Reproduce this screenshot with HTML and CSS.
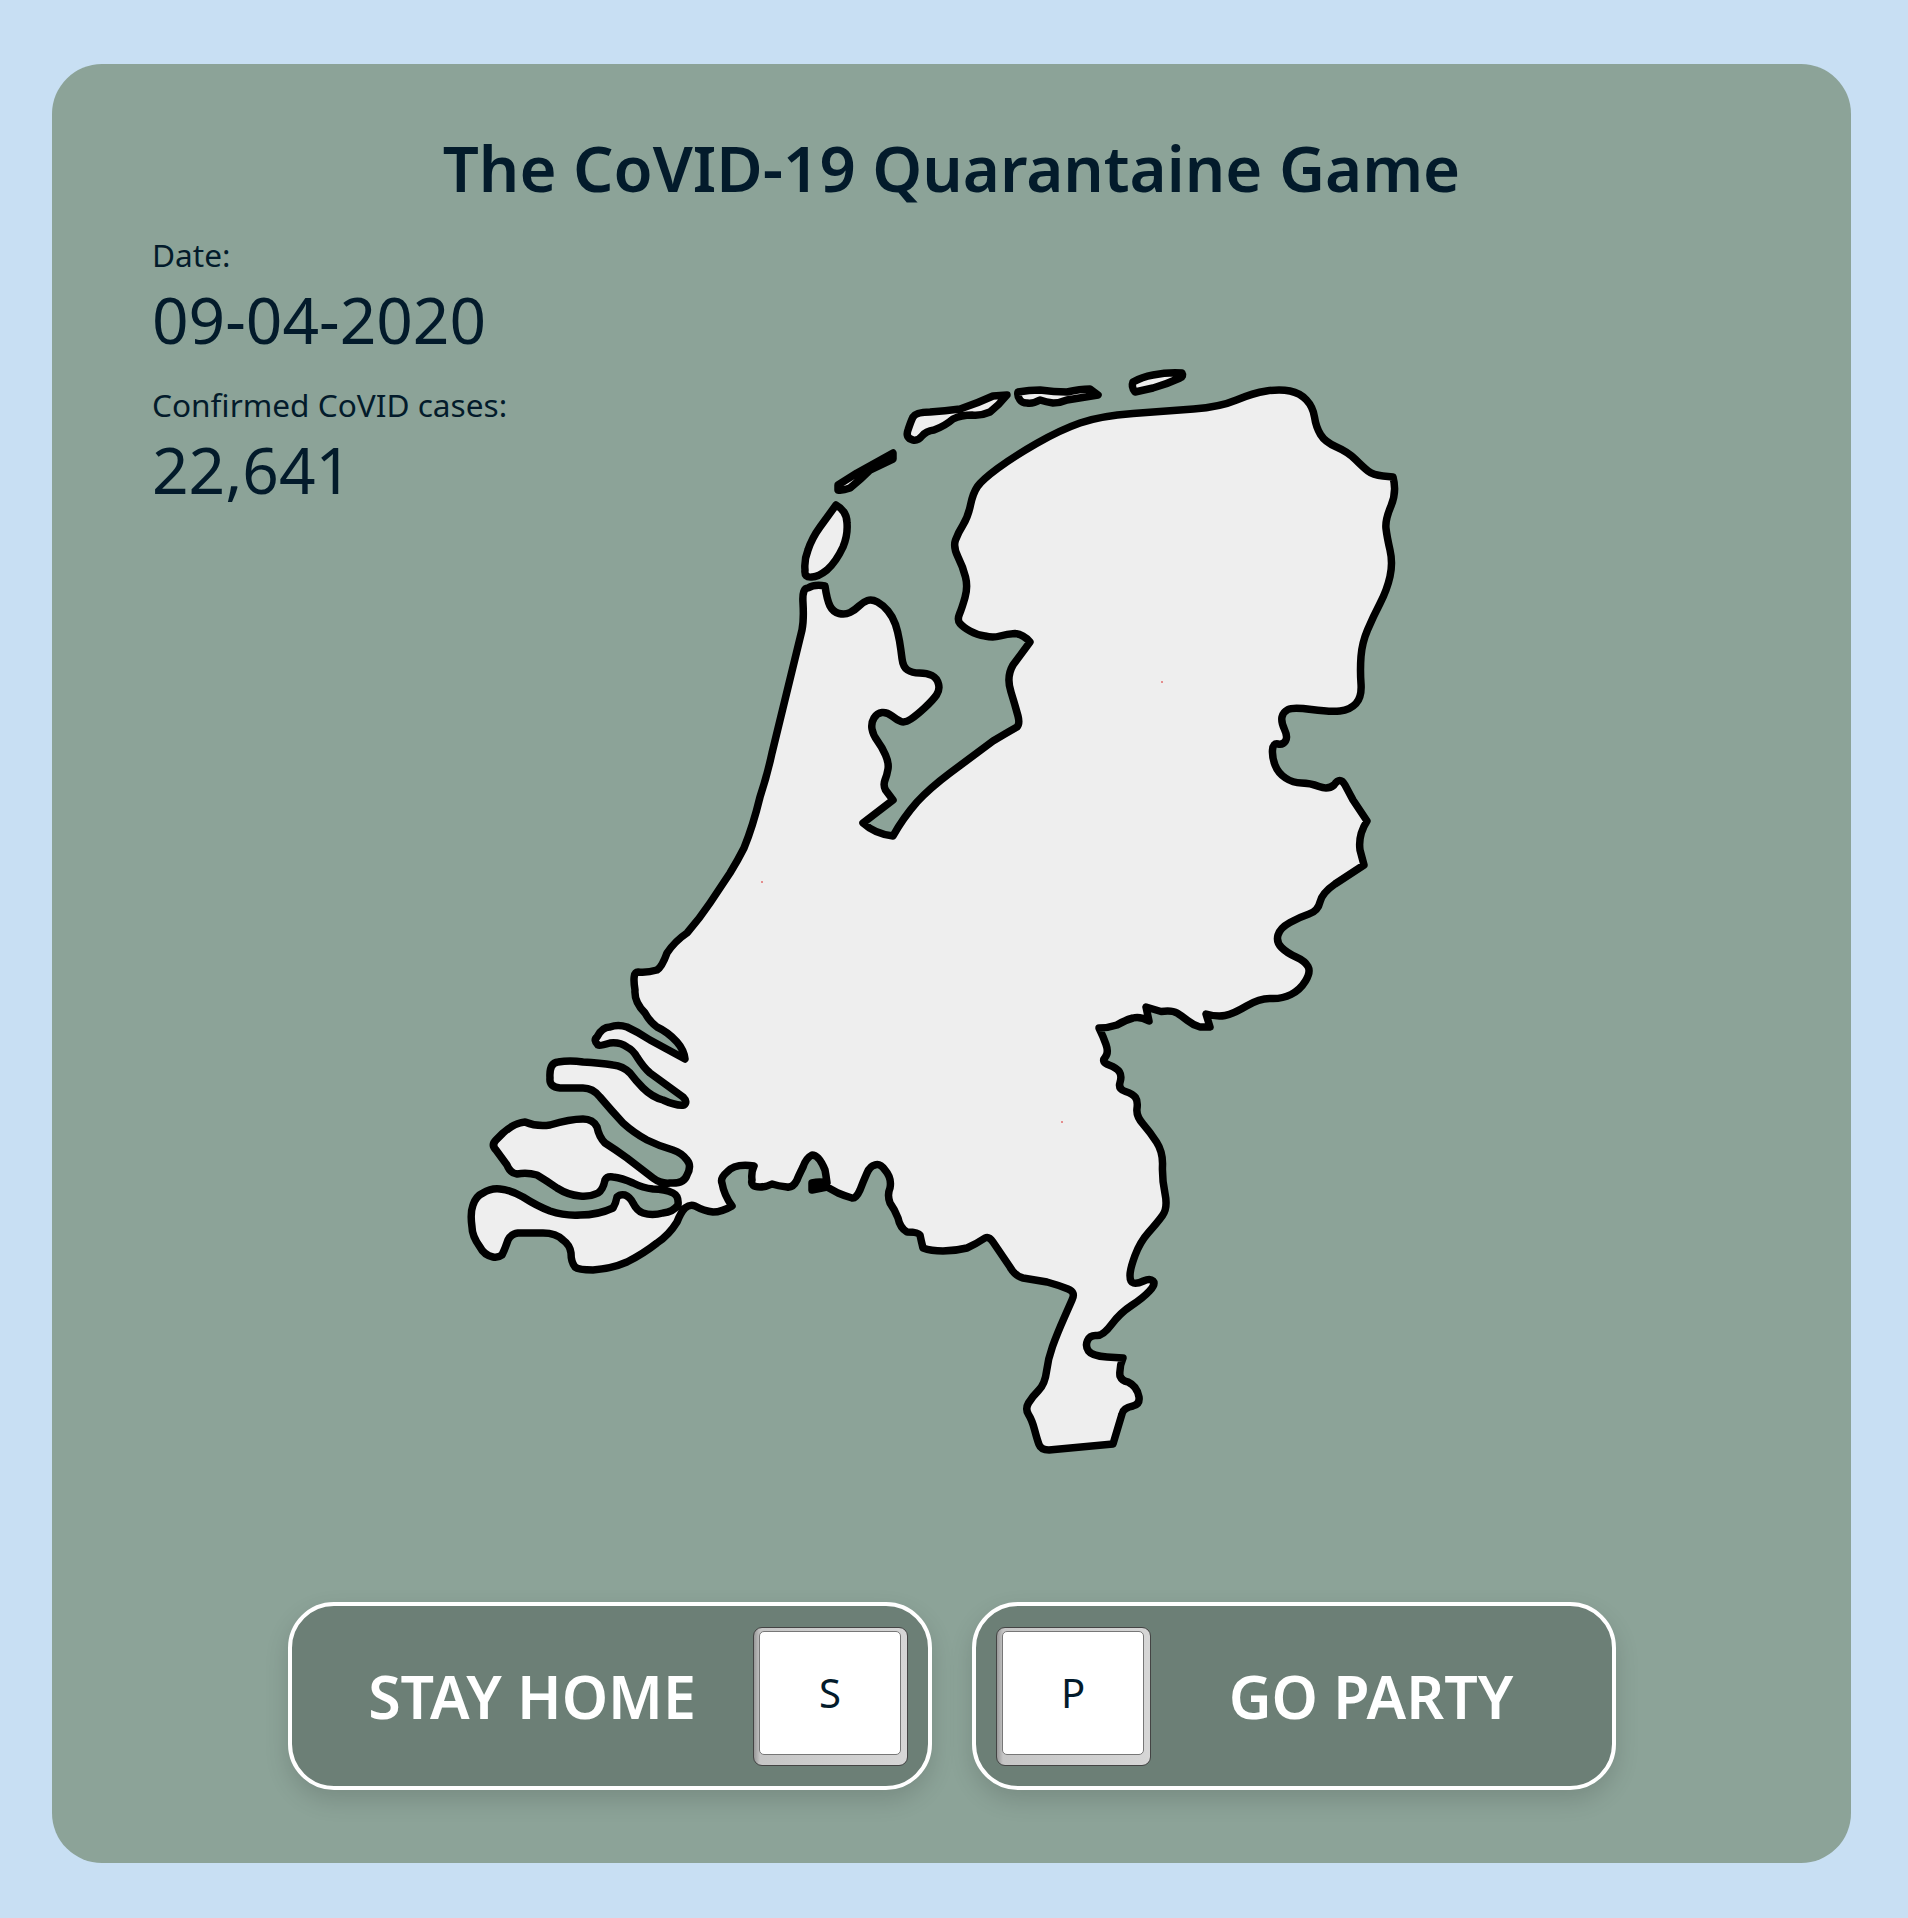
FILE: index.html
```html
<!DOCTYPE html>
<html lang="en">
<head>
<meta charset="utf-8">
<title>The CoVID-19 Quarantaine Game</title>
<link rel="stylesheet" href="styles.css">
</head>
<body>
<main class="card">
  <h1 class="title">The CoVID-19 Quarantaine Game</h1>
  <div class="stage">
    <div class="stats">
      <p class="stat-label">Date:</p>
      <p class="stat-value">09-04-2020</p>
      <p class="stat-label">Confirmed CoVID cases:</p>
      <p class="stat-value">22,641</p>
    </div>
    <svg class="map" viewBox="460 360 950 1100" width="950" height="1100" role="img" aria-label="Map of the Netherlands">
      <g class="land">
        <path d="M825 586Q827 600 830 606Q833 612 839 613.5Q845 615 850 612.5Q855 610 859 606Q863 602 867.5 600.5Q872 599 877.5 602Q883 605 888 611Q893 617 895.5 624.5Q898 632 899.5 641Q901 650 902 658.5Q903 667 907.5 670Q912 673 919.5 673Q927 673 932 675.5Q937 678 938.5 684Q940 690 936.5 695Q933 700 925 707.5Q917 715 911 719Q905 723 901 721.5Q897 720 892 716Q887 712 882 712.5Q877 713 874 718Q871 723 872 729Q873 735 877.5 741Q882 747 885.5 755Q889 763 888 769Q887 775 885 780Q883 785 885.5 790L893 800L863 823Q875 834 893 836Q903 818 917 802Q930 788 950 773L993 741Q1008 732 1017 727Q1020 724 1018 716Q1015 705 1011 692Q1006 677 1013 665L1030 642Q1023 634 1015 633.5Q1007 634 1000 636Q993 638 985 636Q977 635 970 631Q963 627 960 623.5Q957 620 959.5 614Q962 608 965 597.5Q968 587 965.5 577Q963 567 958 557Q953 547 955.5 540Q958 533 963 525Q968 517 970.5 505Q973 493 977.5 486.5Q982 480 997.5 468.5Q1013 457 1036.5 443.5Q1060 430 1080 423Q1100 416 1133 413.5Q1167 411 1193.5 409Q1220 407 1236.5 400Q1253 393 1266.5 391Q1280 389 1290 391Q1300 393 1306.5 400Q1313 407 1314.5 417Q1316 427 1320.5 434.5Q1325 442 1336.5 447Q1348 452 1355.5 459.5Q1363 467 1368 471Q1373 475 1383 476L1393 477Q1397 492 1391 506Q1385 520 1386 528.5Q1387 537 1390 550Q1393 563 1390 576.5Q1387 590 1380 603.5Q1373 617 1367.5 630Q1362 643 1361 656.5Q1360 670 1361 683.5Q1362 697 1356 703.5Q1350 710 1340 711Q1330 712 1311.5 709.5Q1293 707 1288 709.5Q1283 712 1282 717Q1281 722 1284.5 729.5Q1288 737 1285.5 741Q1283 745 1278 744Q1273 743 1272.5 750Q1272 757 1275 765Q1278 773 1285.5 778Q1293 783 1301.5 783Q1310 783 1319 786.5Q1328 790 1334 785Q1340 776 1345 785L1353 800L1367 821Q1358 835 1360 850L1364 865L1335 884Q1322 893 1320 902Q1318 911 1309 914Q1300 917 1290 922.5Q1280 928 1278 935Q1276 942 1281.5 947.5Q1287 953 1296 957Q1305 961 1308 966.5Q1311 972 1305.5 981Q1300 990 1291 994.5Q1282 999 1271 998.5Q1260 998 1246.5 1006Q1233 1014 1225 1015.5Q1217 1017 1206 1014L1210 1027L1200 1027Q1193 1025 1187.5 1020.5Q1182 1016 1177 1013Q1172 1010 1161 1011.5L1146 1007L1149 1021Q1140 1016 1133 1018Q1125 1020 1117 1025Q1108 1028 1099 1028Q1103 1036 1106 1044.5Q1109 1053 1105 1057.5Q1101 1062 1109 1065Q1117 1068 1119.5 1072Q1122 1076 1120 1082.5Q1118 1089 1125.5 1091.5Q1133 1094 1135.5 1097.5Q1138 1101 1137 1108.5Q1136 1116 1143 1124Q1150 1132 1156.5 1142Q1163 1152 1162.5 1165.5Q1162 1179 1165 1193.5Q1168 1208 1162.5 1215.5Q1157 1223 1148.5 1232.5Q1140 1242 1135 1255.5Q1130 1269 1130 1275.5Q1130 1282 1133.5 1283Q1137 1284 1143.5 1281Q1150 1278 1153 1281Q1156 1284 1149.5 1291Q1143 1298 1131.5 1305.5Q1120 1313 1111.5 1324.5Q1103 1336 1096.5 1335.5Q1090 1335 1087.5 1340.5Q1085 1346 1088.5 1351Q1092 1356 1107 1357L1123 1358Q1119 1367 1120 1376Q1122 1381 1128 1382Q1137 1386 1139 1397Q1140 1404 1133 1406Q1123 1408 1122 1414L1113 1444L1049 1450Q1041 1450 1039 1444.5Q1037 1439 1034.5 1429.5Q1032 1420 1028.5 1414.5Q1025 1409 1028.5 1403Q1032 1397 1038.5 1390.5Q1045 1384 1046.5 1371.5Q1048 1359 1052.5 1346.5Q1057 1334 1064.5 1317L1072 1300Q1076 1292 1068 1289Q1058 1285 1047 1282L1023 1278Q1015 1276 1010 1267L993 1242Q989 1236 985 1238Q976 1244 967 1248Q955 1251 943 1251Q931 1251 923 1248Q921 1240 920 1235Q918 1232 907 1232Q900 1228 898 1218Q895 1210 890 1203Q887 1195 890 1188Q892 1178 885 1170Q880 1163 875 1165Q870 1166 867 1173Q863 1182 860 1190Q856 1199 852 1198Q845 1196 838 1193L827 1187L812 1190L812 1183Q820 1181 827 1183Q826 1175 825 1170Q819 1155 812 1155Q806 1158 803 1167Q798 1177 797 1180Q793 1188 787 1187Q778 1186 772 1184Q766 1187 760 1187Q750 1187 752 1180Q751 1172 754 1166Q735 1163 727 1172Q720 1178 722 1183Q724 1195 732 1206Q722 1212 713 1212Q704 1211 695 1206Q690 1204 685 1208Q681 1212 677 1222Q669 1235 657 1243Q643 1254 627 1262Q611 1269 593 1270Q578 1270 575 1267Q571 1262 571 1253Q570 1245 563 1240Q556 1233 543 1233L518 1233Q511 1234 508 1240Q505 1249 502 1255Q498 1258 493 1257Q484 1255 480 1247Q472 1236 472 1227Q470 1213 473 1205Q476 1196 483 1193Q491 1188 500 1189Q511 1190 523 1197Q537 1206 550 1211Q565 1216 580 1215Q598 1215 613 1208Q616 1203 617 1197Q620 1194 625 1195Q630 1197 633 1203Q637 1211 643 1213Q652 1216 663 1213Q673 1212 678 1205Q679 1196 673 1193Q665 1189 653 1189Q643 1188 633 1183Q622 1178 613 1177Q607 1176 605 1180Q603 1190 598 1193Q590 1197 580 1196Q568 1195 557 1188Q547 1181 537 1175Q527 1172 517 1174Q510 1173 507 1165L496 1150Q491 1145 496 1140Q499 1137 503 1133Q514 1123 525 1122Q537 1127 550 1125Q570 1119 583 1119Q593 1119 597 1127Q599 1137 605 1143Q616 1150 627 1158L653 1178Q661 1184 670 1183Q684 1184 687 1175Q692 1166 687 1160Q682 1153 673 1150Q659 1146 647 1140Q634 1133 623 1123Q611 1110 600 1097Q593 1088 583 1088L560 1088Q549 1087 550 1078Q549 1063 558 1062Q570 1060 583 1062Q600 1063 613 1065Q623 1066 630 1073Q636 1081 643 1088Q652 1097 663 1100Q676 1106 684 1105Q688 1102 683 1097L650 1073Q644 1068 637 1057Q633 1050 627 1047Q620 1042 610 1043Q600 1046 598 1045Q593 1040 597 1037Q602 1027 610 1027Q618 1024 627 1027Q638 1032 650 1040L685 1059Q684 1050 677 1042Q668 1032 657 1027Q650 1022 645 1013Q634 1002 635 990Q632 972 638 972Q647 973 657 970Q662 967 667 953Q675 941 687 933Q700 918 710 903L730 873Q738 860 744 848Q753 826 760 797Q767 776 772 753L802 630Q804 620 803 603Q802 588 808 588Q815 584 825 586Z"/>
        <path d="M836 505Q847 511 847 523Q848 535 843 547Q836 562 827 570Q818 577 812 577Q804 578 805 570Q804 560 808 550Q812 538 820 527Z"/>
        <path d="M838 485L857 473L893 453L893 459L870 470Q860 480 850 488Q842 491 838 490Z"/>
        <path d="M930 412Q945 411 960 409Q978 403 993 396L1007 395Q999 405 990 412Q981 416 972 415Q961 415 953 419Q945 426 934 430Q926 431 922 436Q918 441 913 440Q905 438 908 430Q911 421 913 417Q916 412 930 412Z"/>
        <path d="M1018 392Q1029 390 1040 390Q1054 392 1067 392Q1080 389 1090 389L1098 395L1067 400Q1060 403 1053 403Q1046 402 1040 400Q1033 404 1027 403Q1022 403 1020 400Q1017 396 1018 392Z"/>
        <path d="M1133 382Q1142 377 1153 375Q1168 372 1182 373Q1184 376 1180 378Q1167 384 1153 388L1135 392Q1131 387 1133 382Z"/>
      </g>
      <rect class="speck" x="1161" y="681" width="2" height="2"/>
      <rect class="speck" x="761" y="881" width="2" height="2"/>
      <rect class="speck" x="1061" y="1121" width="2" height="2"/>
    </svg>
  </div>
  <div class="actions">
    <button class="action" type="button">
      <span class="action-label">STAY HOME</span>
      <kbd class="key"><span class="key-face">S</span></kbd>
    </button>
    <button class="action" type="button">
      <kbd class="key"><span class="key-face">P</span></kbd>
      <span class="action-label">GO PARTY</span>
    </button>
  </div>
</main>
</body>
</html>
```

FILE: styles.css
```css
* { box-sizing: border-box; }
html, body { margin: 0; padding: 0; }
body {
  background: #c8dff3;
  padding: 64px 57px 55px 52px;
  height: 1918px;
  font-family: "Noto Sans", "Open Sans", sans-serif;
  color: #031b2b;
}
.card {
  width: 1799px;
  height: 1799px;
  background: #8ca398;
  border-radius: 50px;
  padding: 65px 0 0;
  display: flex;
  flex-direction: column;
}
.title {
  margin: 0;
  font-size: 63.5px;
  line-height: 78px;
  font-weight: 600;
  text-align: center;
}
.stage {
  display: grid;
  height: 1292px;
  margin-top: 26px;
}
.stats, .map { grid-area: 1 / 1; }
.stats { padding-left: 100px; position: relative; z-index: 1; }
.stat-label {
  margin: 0;
  font-size: 31.6px;
  line-height: 43px;
}
.stat-value {
  margin: 0 0 20px;
  font-size: 64px;
  line-height: 87px;
}
.map {
  display: block;
  margin-left: 408px;
  margin-top: 127px;
}
.land path {
  fill: #eeeeee;
  stroke: #000;
  stroke-width: 7.5;
  stroke-linejoin: round;
}
.speck { fill: #e58e8e; }
.actions {
  display: flex;
  justify-content: center;
  gap: 40px;
  margin-top: 77px;
}
.action {
  width: 644px;
  height: 188px;
  display: flex;
  align-items: center;
  padding: 22px 20px;
  background: #6c7f76;
  border: 4px solid #fff;
  border-radius: 46px;
  box-shadow: 0 10px 24px rgba(0, 0, 0, 0.14);
  font-family: inherit;
  color: #fff;
}
.action-label {
  flex: 1;
  font-size: 59px;
  font-weight: 600;
  text-align: center;
  white-space: nowrap;
}
.key {
  width: 155px;
  height: 139px;
  flex: none;
  display: block;
  padding: 3px 5.5px 10px;
  background: linear-gradient(90deg, #989898 0, #c6c6c6 6px, #d6d6d6 100%);
  border: 1.5px solid #444;
  border-radius: 9px;
  font-family: inherit;
}
.key-face {
  display: flex;
  align-items: center;
  justify-content: center;
  height: 100%;
  background: #fff;
  border: 1.5px solid #777;
  border-radius: 5px;
  font-size: 40px;
  color: #031b2b;
}
```
